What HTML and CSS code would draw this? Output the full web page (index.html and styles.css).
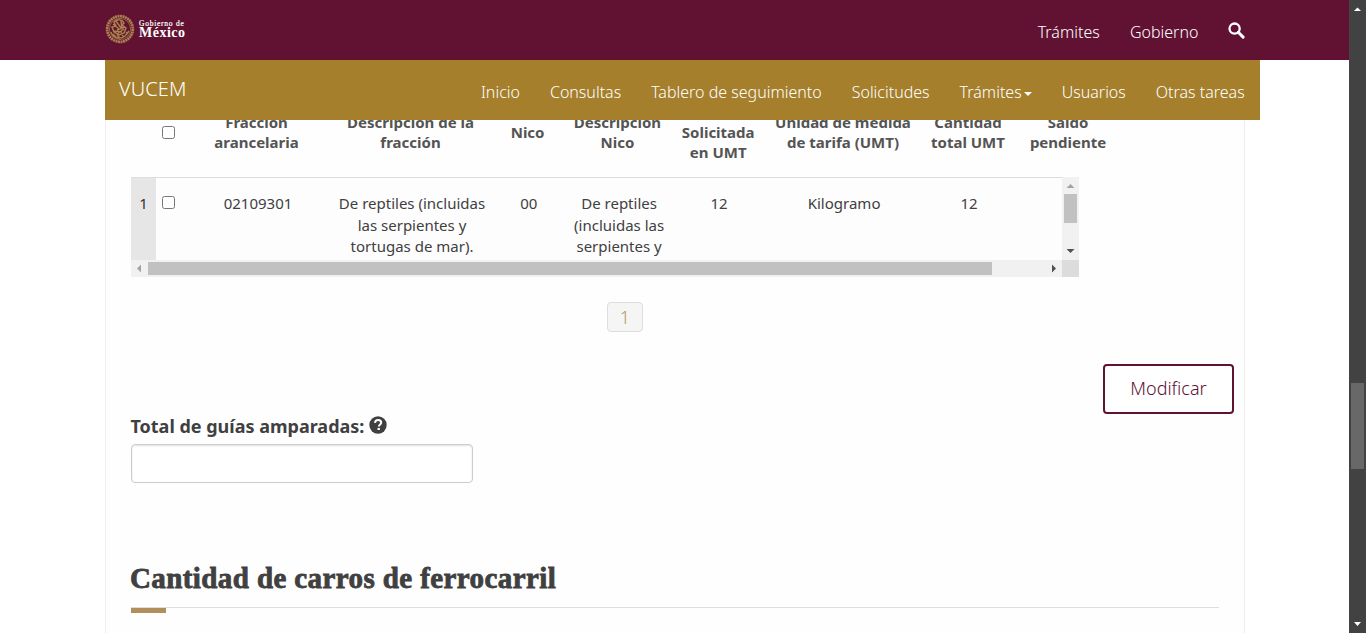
FILE: index.html
```html
<!DOCTYPE html>
<html lang="es">
<head>
<meta charset="utf-8">
<title>VUCEM</title>
<link rel="stylesheet" href="styles.css">
</head>
<body>
<div class="page">
  <header class="gov">
    <div class="brand">
      <svg class="seal" viewBox="0 0 30 30" fill="none" stroke="#a8814f">
        <circle cx="15" cy="15" r="12.8" stroke-width="2.8" stroke-dasharray="2 .5"/>
        <circle cx="15" cy="15" r="10.6" stroke-width=".7"/>
        <path d="M9 8c3-3 8-3 10 1l-2 2 4 3-2 5-5 2-5-3-2-5 4-1zM8 10l6 5M11 7l5 7M16 7l1 8M20 13l-8 3M9 17l8 1M12 20l7-5" stroke-width="1.500"/>
        <path d="M6 18c2 6 9 8 14 4l4-5M8 20l3 3m1-2l3 3m2-3l2 2m2-5l2 2" stroke-width="1.400"/>
      </svg>
      <div class="brand-text"><span class="brand-top">Gobierno de</span><span class="brand-name">México</span></div>
    </div>
    <nav class="gov-nav"><a class="g1">Trámites</a><a class="g2">Gobierno</a>
      <svg class="search" viewBox="0 0 17 17" fill="none" stroke="#fff"><circle cx="6.6" cy="6.6" r="5.1" stroke-width="2.3"/><path d="M10.3 10.3l4.8 4.8" stroke-width="3" stroke-linecap="round"/></svg>
    </nav>
  </header>
  <div class="subbar">
    <span class="app-name">VUCEM</span>
    <nav class="app-nav"><a class="n1">Inicio</a><a class="n2">Consultas</a><a class="n3">Tablero de seguimiento</a><a class="n4">Solicitudes</a><a class="n5">Trámites<i class="caret"></i></a><a class="n6">Usuarios</a><a class="n7">Otras tareas</a></nav>
  </div>
  <main class="panel">
    <div class="thead cols">
      <span></span><span class="check-cell"><input class="check" type="checkbox"></span>
      <span>Fracción<br>arancelaria</span><span>Descripción de la<br>fracción</span><span>Nico</span><span>Descripción<br>Nico</span><span class="three">Solicitada<br>en UMT</span><span>Unidad de medida<br>de tarifa (UMT)</span><span>Cantidad<br>total UMT</span><span>Saldo<br>pendiente</span>
    </div>
    <div class="tbody">
      <div class="row cols">
        <span class="num">1</span><span class="check-cell"><input class="check" type="checkbox"></span>
        <span>02109301</span><span>De reptiles (incluidas<br>las serpientes y<br>tortugas de mar).</span><span>00</span><span>De reptiles<br>(incluidas las<br>serpientes y</span><span>12</span><span>Kilogramo</span><span>12</span>
      </div>
      <div class="vscroll">
        <svg width="17" height="17"><path d="M4.5 11h8L8.500 7z" fill="#a3a3a3"/></svg>
        <div class="vthumb"></div>
        <svg class="end" width="17" height="17"><path d="M4.500 6h8l-4 4z" fill="#505050"/></svg>
      </div>
      <div class="hscroll">
        <svg width="17" height="17"><path d="M10 4.500v8L6 8.500z" fill="#a3a3a3"/></svg>
        <div class="hthumb"></div>
        <svg class="hend" width="17" height="17"><path d="M7 4.500v8l4-4z" fill="#505050"/></svg>
      </div>
      <div class="corner"></div>
    </div>
    <div class="pager"><a class="page-no">1</a></div>
    <div class="actions"><button class="btn">Modificar</button></div>
    <label class="label"><span class="label-text">Total de guías amparadas:</span>
      <svg class="help" viewBox="0 0 18 18"><circle cx="9" cy="9" r="8.700" fill="#404041"/><path d="M6 6.900C6.100 4.900 7.300 4 9.100 4c1.800 0 3.100 1 3.100 2.600 0 2.100-2.400 2-2.400 3.900" fill="none" stroke="#fff" stroke-width="2"/><path d="M8.500 11.900h2.400V14H8.500z" fill="#fff"/></svg>
    </label>
    <input class="field" type="text">
    <h3 class="title"><span class="title-text">Cantidad de carros de ferrocarril</span></h3>
    <div class="rule"><div class="accent"></div></div>
  </main>
</div>
<div class="scrollbar">
  <svg width="17" height="17"><path d="M5 11h7L8.500 7.500z" fill="#fff"/></svg>
  <div class="thumb"></div>
  <svg class="end" width="17" height="17"><path d="M5 6h7l-3.500 4z" fill="#fff"/></svg>
</div>
</body>
</html>
```
FILE: styles.css
```css
* { box-sizing: border-box; }
body { margin: 0; height: 633px; display: flex; overflow: hidden; background: #fff; color: #404041; font-family: "Noto Sans", sans-serif; }
svg { display: block; flex: none; }
.page { width: 1349px; height: 633px; display: flex; flex-direction: column; overflow: hidden; }
.gov { height: 60px; flex: none; background: #611232; display: flex; justify-content: space-between; padding: 0 104px 0 105px; }
.brand { display: flex; gap: 4px; padding-top: 14px; }
.seal { width: 30px; height: 30px; margin-left: -.5px; margin-right: .5px; }
.brand-text { display: flex; flex-direction: column; color: #fff; font-family: "Liberation Serif", serif; font-weight: bold; padding-top: 5px; }
.brand-top { font-size: 7.5px; line-height: 9px; letter-spacing: .75px; font-weight: normal; -webkit-text-stroke: .2px #fff; }
.brand-name { font-size: 14px; line-height: 10px; letter-spacing: .5px; }
.gov-nav { display: flex; gap: 30px; color: #fff; font-size: 16px; font-weight: 300; line-height: 24px; padding-top: 20px; }
.g1, .g2 { margin-right: -.4px; margin-left: .6px; }
.search { width: 17px; height: 17px; margin-top: 2px; }
.subbar { height: 60px; flex: none; margin: 0 89px 0 105px; background: #a57f2c; color: #fff; display: flex; justify-content: space-between; padding: 0 15.3px 0 14px; font-weight: 300; }
.app-name { font-size: 20px; line-height: 28px; padding-top: 15px; letter-spacing: .1px; }
.app-nav { display: flex; gap: 30px; font-size: 16px; line-height: 24px; padding-top: 20px; }
.app-nav a { white-space: nowrap; }
.caret { display: inline-block; border: 4px solid transparent; border-top-color: #fff; border-bottom: 0; margin-left: 2px; vertical-align: middle; }
.panel { flex: 1; min-height: 0; width: 1140px; margin-left: 105px; padding: 0 10px 0 25px; border: solid #eee; border-width: 0 1px; background: #fefefe; overflow: hidden; }
.cols { display: grid; grid-template-columns: 25px 25px 151px 157px 77.2px 102.6px 98.8px 150.8px 99.2px 101px; text-align: center; }
.thead { height: 75px; margin-top: -18px; padding-bottom: 15px; align-items: center; font-size: 15px; font-weight: bold; line-height: 20px; color: #545454; }
.three { padding-top: 20px; }
.check-cell { display: flex; justify-content: center; }
.check { width: 13px; height: 13px; margin: 0; }
.tbody { width: 948px; height: 100px; display: grid; grid-template-columns: 931px 17px; grid-template-rows: 83px 17px; }
.row { border-top: 1px solid #ddd; overflow: hidden; font-size: 15px; line-height: 21.430px; grid-template-columns: 25px 25px 154px 154px 79.6px 101px 99px 151px 99px; background: #fdfdfd; }
.row > span { padding-top: 15.3px; }
.row > .num { background: #e6e6e6; color: #333; }
.row > .check-cell { padding-top: 18px; }
.vscroll { background: #f1f1f1; display: flex; flex-direction: column; }
.vthumb { width: 13px; height: 29px; margin-left: 2px; background: #c1c1c1; }
.end { margin-top: auto; }
.hscroll { background: #f1f1f1; display: flex; }
.hthumb { width: 844px; height: 13px; margin-top: 2px; background: #c1c1c1; }
.hend { margin-left: auto; }
.corner { background: #dcdcdc; }
.pager { display: flex; padding: 25px 0 0 476px; }
.page-no { width: 36px; height: 30px; border: 1px solid #ddd; border-radius: 4px; background: #f5f5f5; text-align: center; font-size: 18px; line-height: 29px; font-weight: 300; color: #b09a5c; }
.actions { display: flex; justify-content: flex-end; margin-top: 32px; }
.btn { width: 131px; height: 50px; border: 2px solid #611232; border-radius: 4px; background: #fff; color: #611232; font: 300 18px "Noto Sans", sans-serif; padding: 0 0 2px; }
.label { display: flex; gap: 5px; font-size: 18px; font-weight: bold; line-height: 24px; height: 30px; margin-left: -.6px; }
.help { width: 18px; height: 18px; margin-top: 2px; }
.field { display: block; width: 342px; height: 39px; border: 1px solid #ccc; border-radius: 4px; background: #fff; box-shadow: inset 0 1px 2px rgba(0,0,0,.12); }
.title { margin: 77px 0 0 -1px; height: 47px; font: bold 29px/36px "Liberation Serif", serif; letter-spacing: .4px; -webkit-text-stroke: .8px #404041; white-space: nowrap; }
.rule { width: 1088px; border-top: 1px solid #ddd; }
.accent { width: 35px; height: 5px; background: #b38e5d; }
.scrollbar { width: 17px; height: 633px; background: #424242; display: flex; flex-direction: column; }
.thumb { width: 13px; height: 86px; margin: 366px 0 0 2px; background: #686868; }
```
